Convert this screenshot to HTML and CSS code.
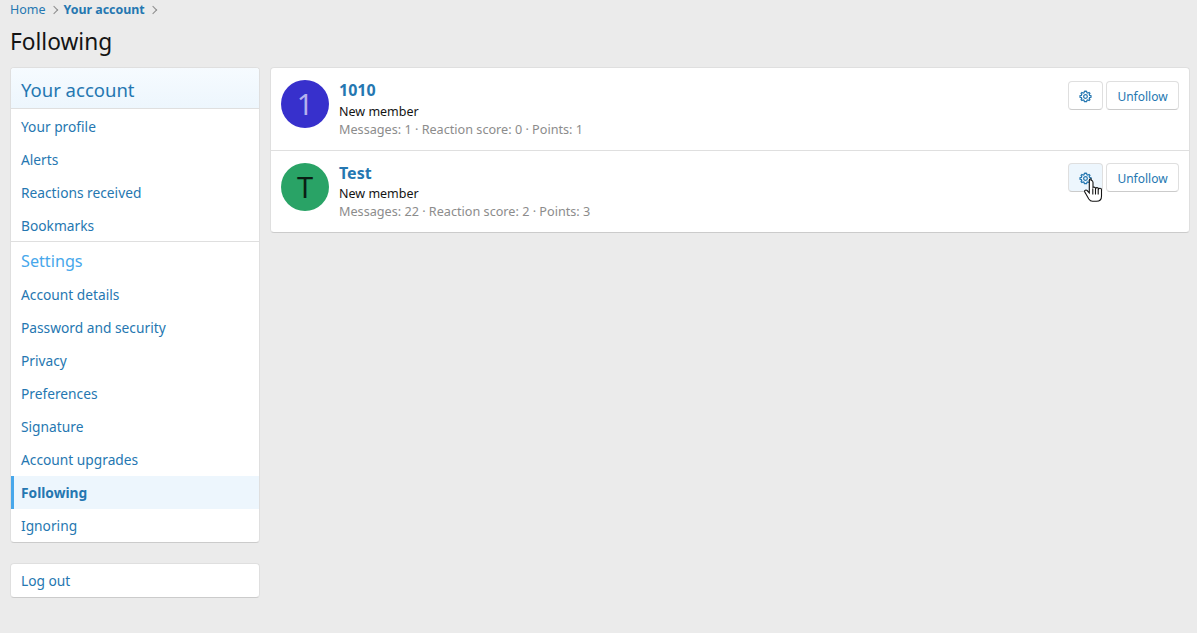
FILE: index.html
```html
<!DOCTYPE html>
<html lang="en">

<head>
  <meta charset="UTF-8" />
  <meta name="viewport" content="width=device-width, initial-scale=1.0" />
  <title>Following</title>
  <link rel="stylesheet" href="styles.css">
</head>

<body>
  <ul class="breadcrumbs">
    <li><a href="#">Home</a><span class="chevron"></span></li>
    <li><a href="#" class="current">Your account</a><span class="chevron"></span></li>
  </ul>

  <h1 class="page-title">Following</h1>

  <div class="page-columns">
    <aside class="sidebar">
      <nav class="block">
        <h3 class="block-header">Your account</h3>
        <a class="nav-item" href="#">Your profile</a>
        <a class="nav-item" href="#">Alerts</a>
        <a class="nav-item" href="#">Reactions received</a>
        <a class="nav-item" href="#">Bookmarks</a>
        <h3 class="block-subheader">Settings</h3>
        <a class="nav-item" href="#">Account details</a>
        <a class="nav-item" href="#">Password and security</a>
        <a class="nav-item" href="#">Privacy</a>
        <a class="nav-item" href="#">Preferences</a>
        <a class="nav-item" href="#">Signature</a>
        <a class="nav-item" href="#">Account upgrades</a>
        <a class="nav-item selected" href="#">Following</a>
        <a class="nav-item" href="#">Ignoring</a>
      </nav>
      <nav class="block">
        <a class="nav-item" href="#">Log out</a>
      </nav>
    </aside>

    <main class="block member-list">
      <div class="member-row">
        <div class="avatar avatar-blue">1</div>
        <div class="member-info">
          <a class="member-name" href="#">1010</a>
          <div class="member-title">New member</div>
          <div class="member-stats">Messages: <a href="#">1</a> · Reaction score: <a href="#">0</a> · Points: <a href="#">1</a></div>
        </div>
        <div class="member-actions">
          <button class="button button-icon">
            <svg class="gear" viewBox="0 0 24 24"><path d="M12 2.2l2 .3.7 2.6 1.6.7 2.4-1.300 1.500 1.500-1.300 2.400.7 1.600 2.600.7v2.600l-2.600.7-.7 1.600 1.300 2.400-1.500 1.500-2.400-1.300-1.600.7-.7 2.600h-4l-.7-2.600-1.600-.7-2.400 1.300-1.500-1.500 1.300-2.400-.7-1.600-2.600-.7v-2.600l2.600-.7.7-1.600-1.300-2.400 1.500-1.500 2.400 1.300 1.600-.7.7-2.600z"/><circle cx="12" cy="12" r="3.400"/></svg>
          </button>
          <button class="button">Unfollow</button>
        </div>
      </div>
      <div class="member-row">
        <div class="avatar avatar-green">T</div>
        <div class="member-info">
          <a class="member-name" href="#">Test</a>
          <div class="member-title">New member</div>
          <div class="member-stats">Messages: <a href="#">22</a> · Reaction score: <a href="#">2</a> · Points: <a href="#">3</a></div>
        </div>
        <div class="member-actions">
          <button class="button button-icon hover">
            <svg class="gear" viewBox="0 0 24 24"><path d="M12 2.2l2 .3.7 2.6 1.6.7 2.4-1.300 1.500 1.500-1.300 2.400.7 1.600 2.600.7v2.600l-2.600.7-.7 1.600 1.300 2.400-1.500 1.500-2.400-1.300-1.600.7-.7 2.600h-4l-.7-2.600-1.600-.7-2.400 1.300-1.500-1.500 1.300-2.400-.7-1.600-2.600-.7v-2.600l2.600-.7.7-1.600-1.300-2.400 1.500-1.500 2.400 1.300 1.600-.7.7-2.600z"/><circle cx="12" cy="12" r="3.400"/></svg>
            <svg class="cursor" viewBox="0 0 20 24"><path d="M8 .7c-1 0-1.700.8-1.700 1.800v12.300l-2.200-2.300c-1-1-2.900-.2-2.500 1.200.2.700.7 1.300 1.200 2l3 5.300c1 1.500 2.200 2.300 3.700 2.300h4c3 0 5-2 5-5v-6.500c0-1-.7-1.600-1.500-1.600-.6 0-1.100.3-1.400.8-.2-.9-.8-1.400-1.600-1.400-.6 0-1.100.3-1.400.8-.2-.8-.8-1.300-1.600-1.300-.4 0-.7.100-1 .3v-5c0-1-.8-1.900-1.800-1.900z"/><path d="M9.800 10.500v6M12.500 10.500v6M15.200 11v5.500"/></svg>
          </button>
          <button class="button">Unfollow</button>
        </div>
      </div>
    </main>
  </div>
</body>

</html>
```

FILE: styles.css
```css
* {
  box-sizing: border-box;
  margin: 0;
  padding: 0;
}

body {
  background-color: #ebebeb;
  color: #141414;
  font-family: 'Noto Sans', 'Open Sans', sans-serif;
  font-size: 14px;
  height: 633px;
  overflow: hidden;
  padding: 1px 7px 0 10px;
}

a {
  color: #2577b1;
  text-decoration: none;
}

.breadcrumbs {
  display: flex;
  list-style: none;
  font-size: 12.500px;
  line-height: 18px;
  height: 18px;
}

.breadcrumbs li {
  display: flex;
  align-items: center;
}

.breadcrumbs .current {
  font-weight: 700;
  font-size: 12.400px;
}

.chevron {
  width: 6px;
  height: 6px;
  margin: 0 7px 0 5px;
  border-top: 1.300px solid #8c8c8c;
  border-right: 1.300px solid #8c8c8c;
  transform: rotate(45deg);
}

.page-title {
  font-size: 22.700px;
  font-weight: 400;
  line-height: 32px;
  margin: 7px 0 9px;
}

.page-columns {
  display: flex;
  gap: 10px;
  align-items: flex-start;
}

.sidebar {
  width: 250px;
  flex: none;
  display: flex;
  flex-direction: column;
  gap: 20px;
}

.block {
  background-color: #fff;
  border: 1px solid #dfdfdf;
  border-bottom-color: #cbcbcb;
  border-radius: 4px;
  overflow: hidden;
}

.block-header {
  background: linear-gradient(#f6fbff, #edf6fd);
  border-bottom: 1px solid #dfdfdf;
  color: #2577b1;
  font-size: 18.500px;
  font-weight: 400;
  line-height: 26px;
  padding: 9px 10px 5px;
  margin-bottom: 1px;
}

.block-subheader {
  border-top: 1px solid #dfdfdf;
  color: #47a7eb;
  font-size: 16.200px;
  font-weight: 400;
  line-height: 24px;
  padding: 7px 10px 5px;
  margin-top: -1px;
}

.nav-item {
  display: block;
  font-size: 13.750px;
  line-height: 33px;
  height: 33px;
  padding: 0 10px;
}

.nav-item.selected {
  background-color: #edf6fd;
  border-left: 3px solid #47a7eb;
  font-weight: 700;
  padding-left: 7px;
}

.member-list {
  flex: 1;
}

.member-row {
  display: flex;
  align-items: flex-start;
  padding: 12px 10px;
  height: 82px;
}

.member-row + .member-row {
  border-top: 1px solid #dfdfdf;
}

.avatar {
  width: 48px;
  height: 48px;
  border-radius: 50%;
  flex: none;
  font-size: 29px;
  line-height: 48px;
  text-align: center;
  margin-right: 10px;
}

.avatar-blue {
  background-color: #3730cc;
  color: #b5b1ee;
}

.avatar-green {
  background-color: #29a366;
  color: #0a1f14;
}

.member-info {
  flex: 1;
  margin-top: -1px;
}

.member-name {
  display: block;
  font-size: 16px;
  font-weight: 700;
  line-height: 22px;
}

.member-title {
  font-size: 12.500px;
  line-height: 20px;
  color: #141414;
}

.member-row:first-child .member-title {
  margin-top: 1px;
}

.member-stats {
  font-size: 12.650px;
  line-height: 17px;
  color: #8c8c8c;
  margin-top: -1px;
}

.member-stats a {
  color: #8c8c8c;
}

.member-actions {
  display: flex;
  gap: 3px;
  margin-top: 1px;
}

.member-row + .member-row .member-actions {
  margin-top: 0;
}

.button {
  background-color: #fff;
  border: 1px solid #dfdfdf;
  border-bottom-color: #cbcbcb;
  border-radius: 4px;
  color: #2577b1;
  font-family: inherit;
  font-size: 12px;
  height: 29px;
  width: 73px;
  padding-top: 1px;
}

.button-icon {
  position: relative;
  width: 35px;
  display: flex;
  align-items: center;
  justify-content: center;
}

.button-icon.hover {
  background-color: #edf6fd;
}

.gear {
  width: 13px;
  height: 13px;
  fill: none;
  stroke: #2577b1;
  stroke-width: 2.200;
}

.cursor {
  position: absolute;
  left: 14px;
  top: 14px;
  width: 20px;
  height: 24px;
  fill: #fff;
  stroke: #141414;
  stroke-width: 1.100;
}
```
